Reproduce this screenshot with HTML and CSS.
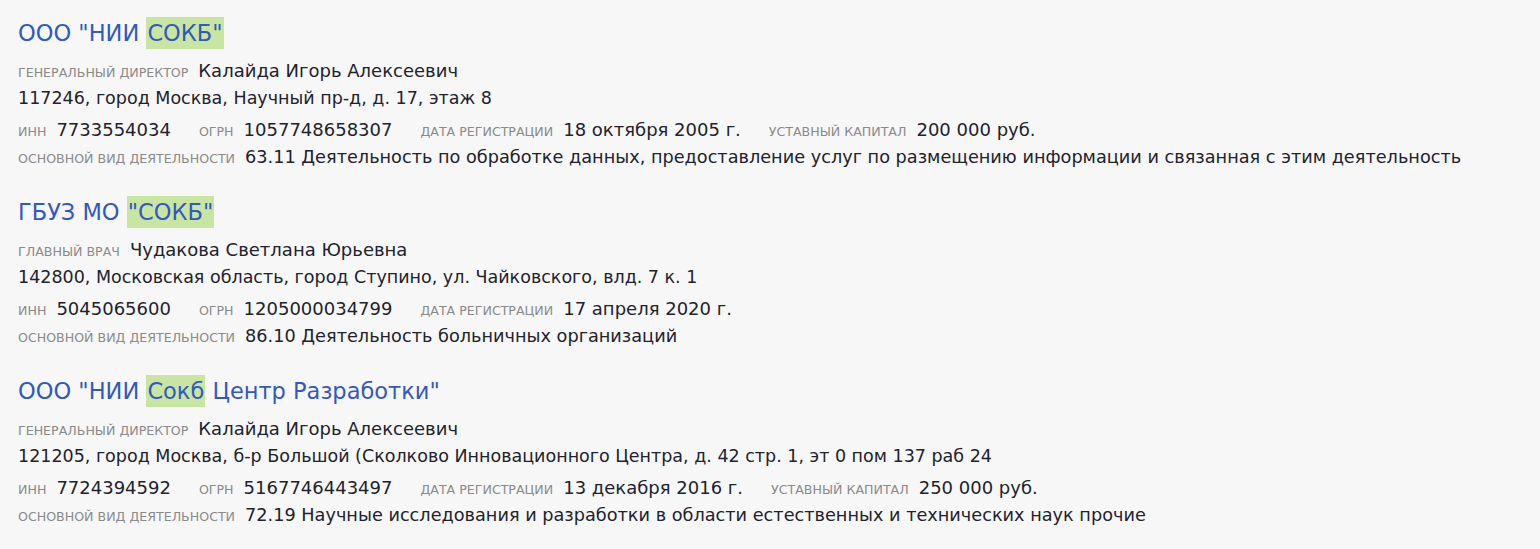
FILE: index.html
```html
<!DOCTYPE html>
<html lang="ru">
<head>
<meta charset="utf-8">
<link rel="stylesheet" href="styles.css">
</head>
<body>
<div class="list">
  <div class="item">
    <a class="title">ООО "НИИ <mark class="hl">СОКБ"</mark></a>
    <div class="row"><span class="lbl">генеральный директор</span><span class="val">Калайда Игорь Алексеевич</span></div>
    <div class="row addr">117246, город Москва, Научный пр-д, д. 17, этаж 8</div>
    <div class="row req">
      <span class="lbl">инн</span><span class="val">7733554034</span>
      <span class="lbl">огрн</span><span class="val">1057748658307</span>
      <span class="lbl">дата регистрации</span><span class="val">18 октября 2005 г.</span>
      <span class="lbl">уставный капитал</span><span class="val">200 000 руб.</span>
    </div>
    <div class="row act"><span class="lbl">основной вид деятельности</span><span class="val">63.11 Деятельность по обработке данных, предоставление услуг по размещению информации и связанная с этим деятельность</span></div>
  </div>
  <div class="item">
    <a class="title">ГБУЗ МО <mark class="hl">"СОКБ"</mark></a>
    <div class="row"><span class="lbl">главный врач</span><span class="val">Чудакова Светлана Юрьевна</span></div>
    <div class="row addr">142800, Московская область, город Ступино, ул. Чайковского, влд. 7 к. 1</div>
    <div class="row req">
      <span class="lbl">инн</span><span class="val">5045065600</span>
      <span class="lbl">огрн</span><span class="val">1205000034799</span>
      <span class="lbl">дата регистрации</span><span class="val">17 апреля 2020 г.</span>
    </div>
    <div class="row act"><span class="lbl">основной вид деятельности</span><span class="val">86.10 Деятельность больничных организаций</span></div>
  </div>
  <div class="item">
    <a class="title">ООО "НИИ <mark class="hl">Сокб</mark> Центр Разработки"</a>
    <div class="row"><span class="lbl">генеральный директор</span><span class="val">Калайда Игорь Алексеевич</span></div>
    <div class="row addr">121205, город Москва, б-р Большой (Сколково Инновационного Центра, д. 42 стр. 1, эт 0 пом 137 раб 24</div>
    <div class="row req">
      <span class="lbl">инн</span><span class="val">7724394592</span>
      <span class="lbl">огрн</span><span class="val">5167746443497</span>
      <span class="lbl">дата регистрации</span><span class="val">13 декабря 2016 г.</span>
      <span class="lbl">уставный капитал</span><span class="val">250 000 руб.</span>
    </div>
    <div class="row act"><span class="lbl">основной вид деятельности</span><span class="val">72.19 Научные исследования и разработки в области естественных и технических наук прочие</span></div>
  </div>
</div>
</body>
</html>
```

FILE: styles.css
```css
html, body {
  margin: 0;
  padding: 0;
  background: #f7f7f7;
}
body {
  font-family: "DejaVu Sans", "Open Sans", sans-serif;
  color: #22222e;
}
.list {
  display: flex;
  flex-direction: column;
  gap: 27px;
  padding: 19px 18px 0 18px;
}
.item {
  display: flex;
  flex-direction: column;
}
.title {
  font-size: 22.5px;
  line-height: 28px;
  color: #3258c2;
  margin-bottom: 10px;
  text-decoration: none;
}
.hl {
  background: #c8e6a2;
  color: inherit;
  padding: 3px 1px;
}
.row {
  display: flex;
  align-items: baseline;
  font-size: 18px;
  line-height: 27px;
  height: 27px;
}
.addr { font-size: 17.5px; line-height: 28px; }
.req { margin-top: 5px; }
.act { line-height: 28px; height: 28px; }
.act .val { font-size: 17.7px; }
.lbl {
  font-size: 12.6px;
  line-height: 1;
  text-transform: uppercase;
  color: #8a8a8a;
  margin-right: 10px;
}
.req .val { margin-right: 28px; }
```
